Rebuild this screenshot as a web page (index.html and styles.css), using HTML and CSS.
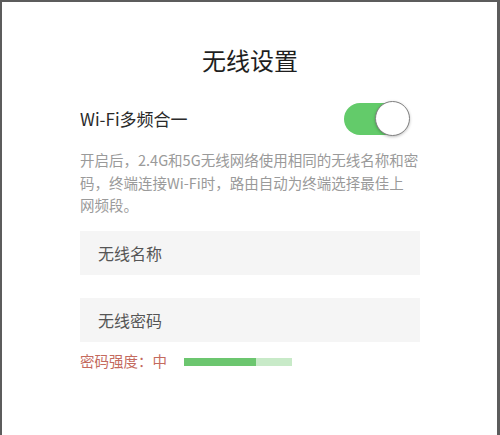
FILE: index.html
```html
<!DOCTYPE html>
<html lang="zh-CN">
<head>
<meta charset="utf-8">
<title>无线设置</title>
<link rel="stylesheet" href="styles.css">
</head>
<body>
<div class="page">
  <h1 class="title">无线设置</h1>
  <div class="row">
    <span class="label">Wi-Fi多频合一</span>
    <div class="toggle"><span class="knob"></span></div>
  </div>
  <p class="desc">开启后，2.4G和5G无线网络使用相同的无线名称和密<br>码，终端连接Wi-Fi时，路由自动为终端选择最佳上<br>网频段。</p>
  <div class="field">无线名称</div>
  <div class="field field-second">无线密码</div>
  <div class="strength">
    <span class="strength-text">密码强度：中</span>
    <div class="bar"><div class="bar-fill" style="width:66.7%"></div></div>
  </div>
</div>
</body>
</html>
```
FILE: styles.css
```css
html, body {
  margin: 0;
  padding: 0;
}
body {
  width: 500px;
  height: 435px;
  box-sizing: border-box;
  background: #fff;
  border-top: 2px solid #5c5c5c;
  border-left: 2px solid #5c5c5c;
  border-right: 3px solid #5c5c5c;
  font-family: "Noto Sans CJK SC", "Noto Sans", sans-serif;
  overflow: hidden;
}
.page {
  display: flex;
  flex-direction: column;
  padding: 43px 77px 0 78px;
}
.title {
  margin: 0;
  font-size: 24px;
  line-height: 30px;
  font-weight: 400;
  color: #1e1e1e;
  text-align: center;
}
.row {
  margin-top: 27px;
  height: 34px;
  display: flex;
  align-items: center;
  justify-content: space-between;
}
.label {
  font-size: 17px;
  color: #2a2a2a;
  line-height: 22px;
}
.toggle {
  position: relative;
  width: 64px;
  height: 32px;
  margin-right: 12px;
  border-radius: 16px;
  background: #63cb6a;
}
.knob {
  position: absolute;
  right: -2px;
  top: -2px;
  width: 33px;
  height: 33px;
  border-radius: 50%;
  background: #fff;
  border: 1.5px solid #808080;
  box-shadow: 0 1px 3px rgba(0,0,0,0.25);
}
.desc {
  margin: 13px 0 0;
  font-size: 14.5px;
  line-height: 22.5px;
  color: #9a9a9a;
  white-space: nowrap;
}
.field {
  margin-top: 14px;
  height: 44px;
  box-sizing: border-box;
  padding-left: 18px;
  display: flex;
  align-items: center;
  background: #f5f5f5;
  font-size: 16px;
  color: #555;
}
.field-second {
  margin-top: 23px;
}
.strength {
  margin-top: 9px;
  height: 20px;
  display: flex;
  align-items: center;
  gap: 17px;
}
.strength-text {
  font-size: 14.5px;
  line-height: 20px;
  color: #c46a5e;
}
.bar {
  width: 108px;
  height: 8px;
  margin-top: 2px;
  background: #c8eac8;
}
.bar-fill {
  height: 100%;
  background: #6cc66f;
}
```
